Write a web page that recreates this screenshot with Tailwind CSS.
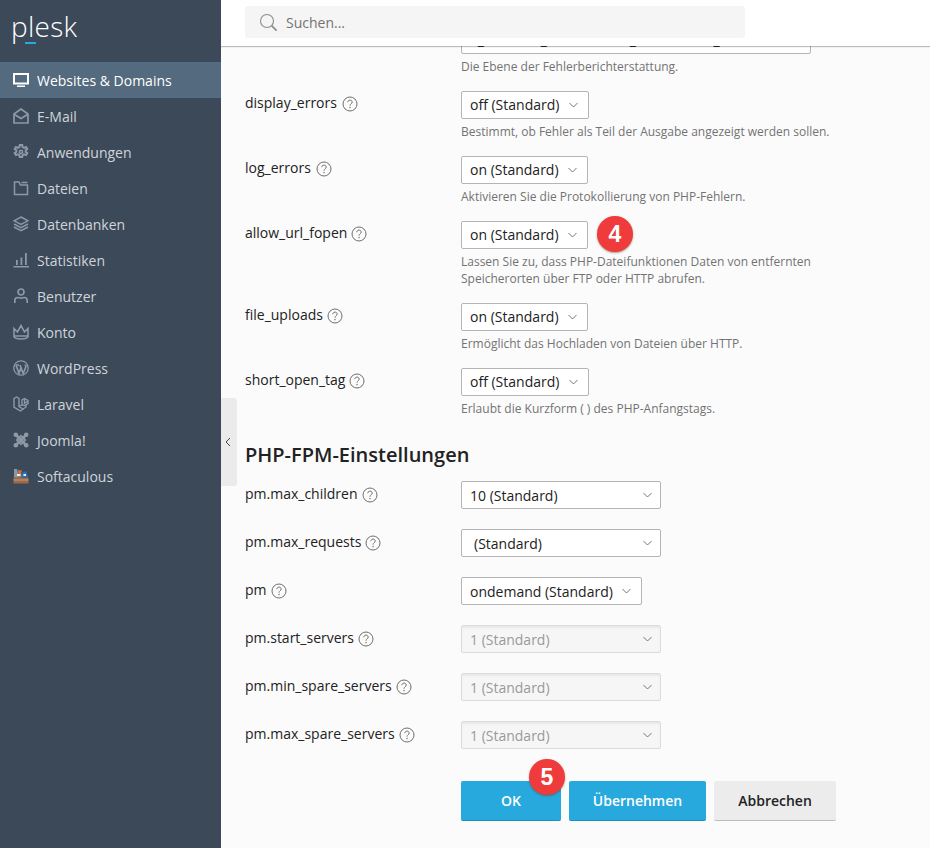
<!DOCTYPE html>
<html lang="de">
<head>
    <meta charset="UTF-8">
    <meta name="viewport" content="width=device-width, initial-scale=1.0">
    <title>Plesk PHP-Einstellungen</title>
    <script src="https://cdn.jsdelivr.net/npm/@tailwindcss/browser@4"></script>
</head>
<body class="bg-[#fbfbfb] text-[#222] font-['Open_Sans',sans-serif] text-[14px] overflow-hidden">

<!-- shared icons -->
<svg class="hidden">
    <symbol id="help" viewBox="0 0 16 16" fill="none"><circle cx="8" cy="8" r="7" stroke="#6e6e6e"/><path d="M5.8 6.2c0-2.8 4.4-2.8 4.4-.1 0 1.7-2.2 1.6-2.2 3.6" stroke="#6e6e6e"/><rect x="7.4" y="10.9" width="1.2" height="1.3" fill="#6e6e6e"/></symbol>
    <symbol id="chevron" viewBox="0 0 9 6" fill="none"><path d="m.5 1 4 4 4-4" stroke="#777"/></symbol>
</svg>

<div class="flex h-[848px] w-[930px]">

    <!-- Sidebar -->
    <aside class="w-[221px] shrink-0 bg-[#3b4959] text-[#d0d4da]">
        <div class="relative h-[62px] pl-[11px]">
            <div class="text-white font-light text-[28px] leading-[40px] pt-[6px] tracking-[0.3px]">plesk</div>
            <div class="absolute left-[25px] top-[42px] w-[11px] h-[2px] bg-[#28a9de]"></div>
        </div>
        <nav>
            <a class="flex items-center h-[36px] pl-[13px] gap-[8px] bg-[#546a7e] text-white">
                <svg class="w-[16px] h-[16px]" viewBox="0 0 16 16" fill="none"><rect x="1" y="2" width="14" height="9.5" stroke="#fff" stroke-width="2"/><rect x="4" y="13.5" width="8" height="1.5" fill="#fff"/></svg>
                <span>Websites &amp; Domains</span>
            </a>
            <a class="flex items-center h-[36px] pl-[13px] gap-[8px]">
                <svg class="w-[16px] h-[16px]" viewBox="0 0 16 16" fill="none" stroke="#8f98a5" stroke-width="1.7"><path d="M1 6 8 1l7 5v9H1z"/><path d="M1.5 6.5 8 10.5l6.5-4"/></svg>
                <span>E-Mail</span>
            </a>
            <a class="flex items-center h-[36px] pl-[13px] gap-[8px]">
                <svg class="w-[16px] h-[16px]" viewBox="0 0 16 16" fill="none" stroke="#8f98a5" stroke-width="2"><path d="M6.8 1h2.4l.4 2 1.6.8 1.9-.8 1.2 2-1.6 1.3v1.5l1.6 1.3-1.2 2-1.9-.8-1.6.8-.4 2H6.8l-.4-2-1.6-.8-1.9.8-1.2-2 1.6-1.3V6.3L1.7 5l1.2-2 1.9.8 1.6-.8z"/><circle cx="8" cy="7.9" r="1.6" stroke-width="1.6"/></svg>
                <span>Anwendungen</span>
            </a>
            <a class="flex items-center h-[36px] pl-[13px] gap-[8px]">
                <svg class="w-[16px] h-[16px]" viewBox="0 0 16 16" fill="none" stroke="#8f98a5" stroke-width="1.5"><path d="M1.5 2v12.5h13V5H7.5L6 2z"/><path d="M8.5 2.5h6"/></svg>
                <span>Dateien</span>
            </a>
            <a class="flex items-center h-[36px] pl-[13px] gap-[8px]">
                <svg class="w-[16px] h-[16px]" viewBox="0 0 16 16" fill="none" stroke="#8f98a5" stroke-width="1.5"><path d="M8 1 15 4.8 8 8.5 1 4.8z"/><path d="M1 8l7 3.7L15 8"/><path d="M1 11l7 3.7 7-3.7"/></svg>
                <span>Datenbanken</span>
            </a>
            <a class="flex items-center h-[36px] pl-[13px] gap-[8px]">
                <svg class="w-[16px] h-[16px]" viewBox="0 0 16 16" fill="#8f98a5"><rect x="0.5" y="14" width="15.5" height="1.5"/><rect x="3" y="8" width="1.8" height="5"/><rect x="7.5" y="5.5" width="1.8" height="7.5"/><rect x="12" y="1" width="1.8" height="12"/></svg>
                <span>Statistiken</span>
            </a>
            <a class="flex items-center h-[36px] pl-[13px] gap-[8px]">
                <svg class="w-[16px] h-[16px]" viewBox="0 0 16 16" fill="none" stroke="#8f98a5" stroke-width="1.7"><circle cx="8" cy="4" r="3"/><path d="M1.8 15v-2.5c0-2 1.5-3 3-3 1 0 1.6.6 3.2.6s2.2-.6 3.2-.6c1.5 0 3 1 3 3V15"/></svg>
                <span>Benutzer</span>
            </a>
            <a class="flex items-center h-[36px] pl-[13px] gap-[8px]">
                <svg class="w-[16px] h-[16px]" viewBox="0 0 16 16" fill="none" stroke="#8f98a5" stroke-width="1.6"><path d="M1 4.5 4.5 8 8 1.5 11.5 8 15 4.5V12H1z"/><path d="M1 12c0 1.8 3 3 7 3s7-1.2 7-3"/></svg>
                <span>Konto</span>
            </a>
            <a class="flex items-center h-[36px] pl-[13px] gap-[8px]">
                <svg class="w-[16px] h-[16px]" viewBox="0 0 16 16" fill="none" stroke="#8f98a5"><circle cx="8" cy="8" r="7.2" stroke-width="1.3"/><path d="M3 5l3 8.5 2-6-1-2.5M6 5h-3M7 5l3.2 8.5L12.8 7c.4-1-.2-2-1.2-2" stroke-width="1.7"/></svg>
                <span>WordPress</span>
            </a>
            <a class="flex items-center h-[36px] pl-[13px] gap-[8px]">
                <svg class="w-[16px] h-[16px]" viewBox="0 0 16 16" fill="none" stroke="#8f98a5" stroke-width="1.4"><path d="M1 2.5 3.5 1 6 2.5v8L10 13l-2.5 2L3 12.3l-2-1.3z"/><path d="M6 10.5 9 8.8V3.8L11.5 2.5 15 4.5v3L11.5 9.5 9 8.8"/><path d="M11.5 2.5v4.8L15 5"/><path d="M10 13l3-2V8.5"/></svg>
                <span>Laravel</span>
            </a>
            <a class="flex items-center h-[36px] pl-[13px] gap-[8px]">
                <svg class="w-[16px] h-[16px]" viewBox="0 0 16 16" fill="none" stroke="#8f98a5" stroke-width="2.6"><path d="M3 3 13 13M13 3 3 13"/><path d="M8 3.8 12.2 8 8 12.2 3.8 8z" stroke-width="1.8"/><circle cx="2.8" cy="2.8" r="2.3" fill="#8f98a5" stroke="none"/><circle cx="13.2" cy="2.8" r="2.3" fill="#8f98a5" stroke="none"/><circle cx="2.8" cy="13.2" r="2.3" fill="#8f98a5" stroke="none"/><circle cx="13.2" cy="13.2" r="2.3" fill="#8f98a5" stroke="none"/></svg>
                <span>Joomla!</span>
            </a>
            <a class="flex items-center h-[36px] pl-[13px] gap-[8px]">
                <svg class="w-[16px] h-[16px]" viewBox="0 0 16 16"><rect x="0.5" y="9.5" width="15" height="6" fill="#9c6b4a"/><rect x="0.5" y="11.5" width="15" height="1" fill="#c79a74"/><path d="M1 1h3l2 8.5H1z" fill="#8c97a3"/><path d="M5 2l4 .5-1 3 1 4H5.5z" fill="#c9743d"/><path d="M8.5 5l5-2 1.5 6.5H8z" fill="#2f6fb5"/><rect x="4" y="6" width="3.5" height="2" fill="#e7edf3"/><rect x="10.5" y="6" width="2.5" height="2" fill="#e7edf3"/></svg>
                <span>Softaculous</span>
            </a>
        </nav>
    </aside>

    <!-- Main -->
    <div class="relative flex-1 min-w-0 flex flex-col overflow-hidden">
        <header class="relative z-10 h-[46px] shrink-0 bg-white shadow-[0_1px_1px_rgba(0,0,0,0.25)] pl-[24px] pt-[6px]">
            <div class="flex items-center w-[500px] h-[32px] bg-[#f5f5f5] rounded-[3px] pl-[14px] gap-[8px] text-[#737373]">
                <svg class="w-[19px] h-[19px]" viewBox="0 0 19 19" fill="none" stroke="#8c8c8c" stroke-width="1.1"><circle cx="8" cy="8" r="6.5"/><path d="m12.6 12.6 5 5" stroke-width="1.6"/></svg>
                <span>Suchen...</span>
            </div>
        </header>

        <!-- Handle to collapse the sidebar -->
        <div class="absolute left-0 top-[398px] w-[16px] h-[88px] pr-[2px] bg-[#ebebeb] rounded-r-[3px] flex items-center justify-center">
            <svg class="w-[8px] h-[10px]" viewBox="0 0 8 10" fill="none" stroke="#444" stroke-width="1"><path d="M6 1 2 5l4 4"/></svg>
        </div>

        <form class="pl-[24px] -mt-[20px]">
            <!-- error_reporting, mostly under the header -->
            <div class="flex h-[65px]">
                <div class="w-[216px]"></div>
                <div>
                    <div class="flex items-center w-[350px] h-[28px] pl-[8px] pb-[2px] whitespace-nowrap overflow-hidden bg-white border border-[#b5b5b5] rounded-[2px]">E_ALL &amp; ~E_NOTICE &amp; ~E_STRICT &amp; ~E_DEPRECATED</div>
                    <p class="mt-[4px] text-[12px] leading-[17px] text-[#737373]">Die Ebene der Fehlerberichterstattung.</p>
                </div>
            </div>

            <div class="flex h-[65px]">
                <div class="w-[216px] pt-[2px] flex items-start gap-[5px] leading-[20px]">display_errors
                    <svg class="w-[16px] h-[16px] mt-[3px]"><use href="#help"/></svg>
                </div>
                <div>
                    <div class="flex items-center justify-between w-[128px] h-[28px] pl-[8px] pr-[10px] pb-[2px] bg-white border border-[#b5b5b5] rounded-[2px]">off (Standard)
                        <svg class="w-[9px] h-[6px] mt-[2px]"><use href="#chevron"/></svg>
                    </div>
                    <p class="mt-[4px] text-[12px] leading-[17px] text-[#737373]">Bestimmt, ob Fehler als Teil der Ausgabe angezeigt werden sollen.</p>
                </div>
            </div>

            <div class="flex h-[65px]">
                <div class="w-[216px] pt-[2px] flex items-start gap-[5px] leading-[20px]">log_errors
                    <svg class="w-[16px] h-[16px] mt-[3px]"><use href="#help"/></svg>
                </div>
                <div>
                    <div class="flex items-center justify-between w-[127px] h-[28px] pl-[8px] pr-[10px] pb-[2px] bg-white border border-[#b5b5b5] rounded-[2px]">on (Standard)
                        <svg class="w-[9px] h-[6px] mt-[2px]"><use href="#chevron"/></svg>
                    </div>
                    <p class="mt-[4px] text-[12px] leading-[17px] text-[#737373]">Aktivieren Sie die Protokollierung von PHP-Fehlern.</p>
                </div>
            </div>

            <div class="flex h-[82px]">
                <div class="w-[216px] pt-[2px] flex items-start gap-[4px] leading-[20px]">allow_url_fopen
                    <svg class="w-[16px] h-[16px] mt-[3px]"><use href="#help"/></svg>
                </div>
                <div class="relative">
                    <div class="flex items-center justify-between w-[127px] h-[28px] pl-[8px] pr-[10px] pb-[2px] bg-white border border-[#b5b5b5] rounded-[2px]">on (Standard)
                        <svg class="w-[9px] h-[6px] mt-[2px]"><use href="#chevron"/></svg>
                    </div>
                    <p class="mt-[4px] w-[400px] text-[12px] leading-[17px] text-[#737373]">Lassen Sie zu, dass PHP-Dateifunktionen Daten von entfernten Speicherorten über FTP oder HTTP abrufen.</p>
                    <!-- Badge 4 -->
                    <div class="absolute left-[136px] -top-[5px] w-[36px] h-[36px] rounded-full bg-[#ef3b3b] shadow-[0_1px_2px_rgba(90,60,30,0.5)] flex items-center justify-center text-white font-bold text-[23px] font-['Liberation_Sans',sans-serif]">4</div>
                </div>
            </div>

            <div class="flex h-[65px]">
                <div class="w-[216px] pt-[2px] flex items-start gap-[4px] leading-[20px]">file_uploads
                    <svg class="w-[16px] h-[16px] mt-[3px]"><use href="#help"/></svg>
                </div>
                <div>
                    <div class="flex items-center justify-between w-[127px] h-[28px] pl-[8px] pr-[10px] pb-[2px] bg-white border border-[#b5b5b5] rounded-[2px]">on (Standard)
                        <svg class="w-[9px] h-[6px] mt-[2px]"><use href="#chevron"/></svg>
                    </div>
                    <p class="mt-[4px] text-[12px] leading-[17px] text-[#737373]">Ermöglicht das Hochladen von Dateien über HTTP.</p>
                </div>
            </div>

            <div class="flex h-[70px]">
                <div class="w-[216px] pt-[2px] flex items-start gap-[4px] leading-[20px]">short_open_tag
                    <svg class="w-[16px] h-[16px] mt-[3px]"><use href="#help"/></svg>
                </div>
                <div>
                    <div class="flex items-center justify-between w-[128px] h-[28px] pl-[8px] pr-[10px] pb-[2px] bg-white border border-[#b5b5b5] rounded-[2px]">off (Standard)
                        <svg class="w-[9px] h-[6px] mt-[2px]"><use href="#chevron"/></svg>
                    </div>
                    <p class="mt-[4px] text-[12px] leading-[17px] text-[#737373]">Erlaubt die Kurzform ( ) des PHP-Anfangstags.</p>
                </div>
            </div>

            <h2 class="h-[43px] text-[20px] leading-[34px] font-semibold text-[#222]">PHP-FPM-Einstellungen</h2>

            <div class="flex h-[48px]">
                <div class="w-[216px] pt-[3px] flex items-start gap-[4px] leading-[20px]">pm.max_children
                    <svg class="w-[16px] h-[16px] mt-[3px]"><use href="#help"/></svg>
                </div>
                <div class="flex items-center justify-between w-[200px] h-[28px] pl-[8px] pr-[8px] bg-white border border-[#b5b5b5] rounded-[2px]">10 (Standard)
                    <svg class="w-[9px] h-[6px]"><use href="#chevron"/></svg>
                </div>
            </div>

            <div class="flex h-[48px]">
                <div class="w-[216px] pt-[3px] flex items-start gap-[4px] leading-[20px]">pm.max_requests
                    <svg class="w-[16px] h-[16px] mt-[3px]"><use href="#help"/></svg>
                </div>
                <div class="flex items-center justify-between w-[200px] h-[28px] pl-[12px] pr-[8px] bg-white border border-[#b5b5b5] rounded-[2px]">(Standard)
                    <svg class="w-[9px] h-[6px]"><use href="#chevron"/></svg>
                </div>
            </div>

            <div class="flex h-[48px]">
                <div class="w-[216px] pt-[3px] flex items-start gap-[4px] leading-[20px]">pm
                    <svg class="w-[16px] h-[16px] mt-[3px]"><use href="#help"/></svg>
                </div>
                <div class="flex items-center justify-between w-[181px] h-[28px] pl-[8px] pr-[10px] bg-white border border-[#b5b5b5] rounded-[2px]">ondemand (Standard)
                    <svg class="w-[9px] h-[6px]"><use href="#chevron"/></svg>
                </div>
            </div>

            <div class="flex h-[48px]">
                <div class="w-[216px] pt-[3px] flex items-start gap-[4px] leading-[20px]">pm.start_servers
                    <svg class="w-[16px] h-[16px] mt-[3px]"><use href="#help"/></svg>
                </div>
                <div class="flex items-center justify-between w-[200px] h-[28px] pl-[8px] pr-[8px] bg-[#f6f6f6] border border-[#dcdcdc] rounded-[2px] shadow-[inset_0_2px_2px_rgba(0,0,0,0.06)] text-[#9a9a9a]">1 (Standard)
                    <svg class="w-[9px] h-[6px]"><use href="#chevron"/></svg>
                </div>
            </div>

            <div class="flex h-[48px]">
                <div class="w-[216px] pt-[3px] flex items-start gap-[4px] leading-[20px]">pm.min_spare_servers
                    <svg class="w-[16px] h-[16px] mt-[3px]"><use href="#help"/></svg>
                </div>
                <div class="flex items-center justify-between w-[200px] h-[28px] pl-[8px] pr-[8px] bg-[#f6f6f6] border border-[#dcdcdc] rounded-[2px] shadow-[inset_0_2px_2px_rgba(0,0,0,0.06)] text-[#9a9a9a]">1 (Standard)
                    <svg class="w-[9px] h-[6px]"><use href="#chevron"/></svg>
                </div>
            </div>

            <div class="flex h-[60px]">
                <div class="w-[216px] pt-[3px] flex items-start gap-[4px] leading-[20px]">pm.max_spare_servers
                    <svg class="w-[16px] h-[16px] mt-[3px]"><use href="#help"/></svg>
                </div>
                <div class="flex items-center justify-between w-[200px] h-[28px] pl-[8px] pr-[8px] bg-[#f6f6f6] border border-[#dcdcdc] rounded-[2px] shadow-[inset_0_2px_2px_rgba(0,0,0,0.06)] text-[#9a9a9a]">1 (Standard)
                    <svg class="w-[9px] h-[6px]"><use href="#chevron"/></svg>
                </div>
            </div>

            <!-- Buttons -->
            <div class="relative flex gap-[8px] ml-[216px] font-semibold">
                <button type="button" class="w-[100px] h-[40px] bg-[#28a9de] border-b border-[#1f8fc0] rounded-[2px] text-white">OK</button>
                <button type="button" class="w-[137px] h-[40px] bg-[#28a9de] border-b border-[#1f8fc0] rounded-[2px] text-white">Übernehmen</button>
                <button type="button" class="w-[122px] h-[40px] bg-[#ececec] border-b border-[#bdbdbd] rounded-[2px] text-[#222]">Abbrechen</button>
                <!-- Badge 5 -->
                <div class="absolute left-[68px] -top-[22px] w-[36px] h-[36px] rounded-full bg-[#ef3b3b] shadow-[0_1px_2px_rgba(90,60,30,0.5)] flex items-center justify-center text-white font-bold text-[23px] font-['Liberation_Sans',sans-serif]">5</div>
            </div>
        </form>
    </div>
</div>
</body>
</html>
